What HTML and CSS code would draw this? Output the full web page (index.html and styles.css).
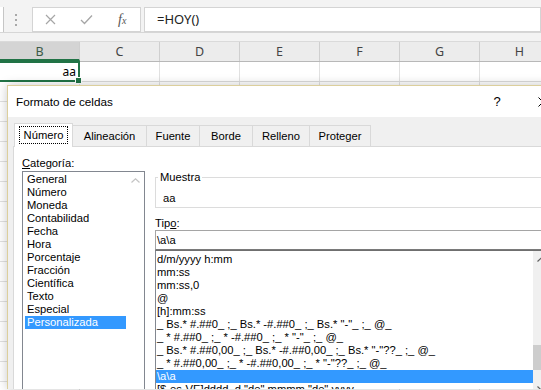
FILE: index.html
```html
<!DOCTYPE html>
<html lang="es">
<head>
    <meta charset="UTF-8">
    <title>Formato de celdas</title>
    <link rel="stylesheet" href="styles.css">
</head>
<body>
    <!-- barra de fórmulas -->
    <div class="formula-bar">
        <div class="namebox-edge"></div>
        <div class="grip"><i></i><i></i><i></i></div>
        <div class="fx-buttons">
            <span class="fx-slot">
                <svg width="11" height="11" viewBox="0 0 11 11"><path d="M1 1L10 10M10 1L1 10" stroke="#a6a6a6" stroke-width="1.2" fill="none"/></svg>
            </span>
            <span class="fx-slot">
                <svg width="13" height="11" viewBox="0 0 13 11"><path d="M1 6L4.5 9.5L12 1.5" stroke="#a6a6a6" stroke-width="1.3" fill="none"/></svg>
            </span>
            <span class="fx-slot fx">f<sub>x</sub></span>
        </div>
        <div class="formula">=HOY()</div>
    </div>
    <div class="bar-gap"></div>

    <!-- hoja -->
    <div class="col-headers">
        <div class="col sel">B</div>
        <div class="col">C</div>
        <div class="col">D</div>
        <div class="col">E</div>
        <div class="col">F</div>
        <div class="col">G</div>
        <div class="col">H</div>
    </div>
    <div class="row">
        <div class="cell active">aa<span class="handle"></span></div>
        <div class="cell"></div>
        <div class="cell"></div>
        <div class="cell"></div>
        <div class="cell"></div>
        <div class="cell"></div>
        <div class="cell"></div>
    </div>
    <div class="sheet-rest"></div>

    <!-- dialogo -->
    <div class="dialog">
        <div class="dialog-title">
            <span class="title-text">Formato de celdas</span>
            <span class="title-btn">?</span>
            <span class="title-btn">
                <svg width="10" height="10" viewBox="0 0 10 10"><path d="M0.5 0.5L9.5 9.5M9.5 0.5L0.5 9.5" stroke="#000" stroke-width="1" fill="none"/></svg>
            </span>
        </div>

        <div class="tabs">
            <div class="tab active" style="width: 59px"><span class="focus">Número</span></div>
            <div class="tab" style="width: 75px">Alineación</div>
            <div class="tab" style="width: 54px">Fuente</div>
            <div class="tab" style="width: 54px">Borde</div>
            <div class="tab" style="width: 58px">Relleno</div>
            <div class="tab" style="width: 62px">Proteger</div>
        </div>

        <div class="panel">
            <div class="left-col">
                <div class="label"><u>C</u>ategoría:</div>
                <div class="cat-list">
                    <div class="items">
                        <div class="item">General</div>
                        <div class="item">Número</div>
                        <div class="item">Moneda</div>
                        <div class="item">Contabilidad</div>
                        <div class="item">Fecha</div>
                        <div class="item">Hora</div>
                        <div class="item">Porcentaje</div>
                        <div class="item">Fracción</div>
                        <div class="item">Científica</div>
                        <div class="item">Texto</div>
                        <div class="item">Especial</div>
                        <div class="item selected">Personalizada</div>
                    </div>
                    <div class="scroll disabled">
                        <div class="arrow">
                            <svg width="9" height="5" viewBox="0 0 9 5"><path d="M0.5 4.5L4.5 0.8L8.5 4.5" stroke="#c4c4c4" stroke-width="1.2" fill="none"/></svg>
                        </div>
                    </div>
                </div>
            </div>

            <div class="right-col">
                <fieldset class="sample">
                    <legend>Muestra</legend>
                    <div class="sample-value">aa</div>
                </fieldset>

                <div class="label tipo">Tip<u>o</u>:</div>
                <div class="type-input">\a\a</div>
                <div class="type-list">
                    <div class="items">
                        <div class="item">d/m/yyyy h:mm</div>
                        <div class="item">mm:ss</div>
                        <div class="item">mm:ss,0</div>
                        <div class="item">@</div>
                        <div class="item">[h]:mm:ss</div>
                        <div class="item">_ Bs.* #.##0_ ;_ Bs.* -#.##0_ ;_ Bs.* "-"_ ;_ @_</div>
                        <div class="item">_ * #.##0_ ;_ * -#.##0_ ;_ * "-"_ ;_ @_</div>
                        <div class="item">_ Bs.* #.##0,00_ ;_ Bs.* -#.##0,00_ ;_ Bs.* "-"??_ ;_ @_</div>
                        <div class="item">_ * #.##0,00_ ;_ * -#.##0,00_ ;_ * "-"??_ ;_ @_</div>
                        <div class="item selected">\a\a</div>
                        <div class="item">[$-es-VE]dddd, d "de" mmmm "de" yyyy</div>
                    </div>
                    <div class="scroll">
                        <div class="arrow">
                            <svg width="9" height="5" viewBox="0 0 9 5"><path d="M0.5 4.5L4.5 0.8L8.5 4.5" stroke="#606060" stroke-width="1.2" fill="none"/></svg>
                        </div>
                        <div class="track"><div class="thumb"></div></div>
                        <div class="arrow">
                            <svg width="9" height="5" viewBox="0 0 9 5"><path d="M0.5 0.5L4.5 4.2L8.5 0.5" stroke="#606060" stroke-width="1.2" fill="none"/></svg>
                        </div>
                    </div>
                </div>
            </div>
        </div>
    </div>
</body>
</html>
```

FILE: styles.css
```css
body {
    margin: 0;
    width: 541px;
    height: 390px;
    overflow: hidden;
    position: relative;
    background: #fff;
    font-family: "Noto Sans", sans-serif;
    color: #000;
}

/* barra de formulas */
.formula-bar {
    display: flex;
    height: 33px;
    padding-top: 7px;
    box-sizing: border-box;
    background: #f3f3f3;
    border-bottom: 1px solid #d6d6d6;
}
.namebox-edge {
    width: 3px;
    height: 25px;
    background: #fff;
    border-right: 1px solid #c6c6c6;
}
.grip {
    width: 23px;
    display: flex;
    flex-direction: column;
    align-items: center;
    justify-content: center;
    gap: 3px;
}
.grip i {
    width: 2px;
    height: 2px;
    background: #a8a8a8;
}
.fx-buttons {
    display: flex;
    width: 109px;
    height: 25px;
    margin-left: 5px;
    box-sizing: border-box;
    background: #fff;
    border: 1px solid #d4d4d4;
}
.fx-slot {
    width: 36px;
    display: flex;
    align-items: center;
    justify-content: center;
}
.fx {
    font-family: "Liberation Serif", serif;
    font-style: italic;
    font-size: 14px;
    color: #555;
    padding-top: 1px;
}
.fx sub {
    font-size: 10px;
    vertical-align: -1px;
}
.formula {
    flex: 1;
    height: 25px;
    margin-left: 3px;
    box-sizing: border-box;
    background: #fff;
    border: 1px solid #d4d4d4;
    padding-left: 12px;
    font-size: 13px;
    line-height: 22px;
    color: #222;
}
.bar-gap {
    height: 8px;
    background: #f3f3f3;
}

/* hoja */
.col-headers {
    display: flex;
    height: 21px;
    box-sizing: border-box;
    background: #ececec;
    border-top: 1px solid #dadada;
    border-bottom: 1px solid #b8b8b8;
}
.col {
    flex: none;
    width: 80px;
    box-sizing: border-box;
    border-right: 1px solid #cfcfcf;
    text-align: center;
    font-size: 12.5px;
    line-height: 19px;
    color: #444;
}
.col.sel {
    background: #d4d4d4;
    color: #3d5a47;
    border-bottom: 2px solid #217346;
}
.row {
    display: flex;
    height: 20px;
    box-sizing: border-box;
    border-bottom: 1px solid #dadada;
}
.cell {
    flex: none;
    width: 80px;
    box-sizing: border-box;
    border-right: 1px solid #e1e1e1;
}
.cell.active {
    position: relative;
    margin-top: -1px;
    height: 21px;
    border: 2px solid #217346;
    border-left: none;
    text-align: right;
    padding-right: 2px;
    font-size: 12px;
    line-height: 18px;
}
.handle {
    position: absolute;
    right: -4px;
    bottom: -4px;
    width: 5px;
    height: 5px;
    background: #217346;
    border: 1px solid #fff;
}
.sheet-rest {
    height: 308px;
    background:
        repeating-linear-gradient(to bottom, transparent 0 19px, #e1e1e1 19px 20px),
        repeating-linear-gradient(to right, transparent 0 79px, #e1e1e1 79px 80px);
}

/* dialogo */
.dialog {
    position: absolute;
    left: 7px;
    top: 85px;
    width: 558px;
    height: 303px;
    overflow: hidden;
    background: #f0f0f0;
    border: 1px solid #dccf9c;
    border-bottom: none;
    box-shadow: 0 0 10px rgba(0, 0, 0, 0.22);
    font-family: "Liberation Sans", sans-serif;
    font-size: 11.2px;
}
.dialog-title {
    display: flex;
    align-items: center;
    height: 31px;
    background: #fff;
    padding-left: 8px;
}
.title-text {
    flex: 1;
    font-size: 11.7px;
}
.title-btn {
    width: 46px;
    text-align: center;
    font-size: 13px;
    display: flex;
    justify-content: center;
}
.tabs {
    display: flex;
    align-items: flex-end;
    height: 23px;
    margin-top: 6px;
    padding-left: 6px;
}
.tab {
    flex: none;
    height: 21px;
    box-sizing: border-box;
    margin-left: -1px;
    background: #f0f0f0;
    border: 1px solid #d9d9d9;
    border-bottom: none;
    text-align: center;
    line-height: 20px;
}
.tab.active {
    height: 24px;
    margin-bottom: -1px;
    margin-left: 0;
    position: relative;
    z-index: 1;
    background: #fff;
    line-height: 22px;
}
.focus {
    outline: 1px dotted #000;
    outline-offset: 1px;
    padding: 1px 3px;
}
.panel {
    display: grid;
    grid-template-columns: 123px 396px;
    column-gap: 10px;
    margin-left: 5px;
    height: 240px;
    padding: 8px;
    background: #fff;
    border: 1px solid #d9d9d9;
}
.label {
    line-height: 16px;
}
.cat-list {
    display: flex;
    height: 230px;
    box-sizing: border-box;
    border: 1px solid #828790;
}
.items {
    flex: 1;
    padding: 1px 1px 0 2px;
    overflow: hidden;
}
.item {
    height: 13px;
    line-height: 13px;
    padding-left: 2px;
    white-space: nowrap;
}
.item.selected {
    background: #3399ff;
    color: #fff;
}
.scroll {
    flex: none;
    width: 17px;
    display: flex;
    flex-direction: column;
    background: #f0f0f0;
}
.scroll.disabled {
    background: #fff;
}
.arrow {
    height: 17px;
    display: flex;
    align-items: center;
    justify-content: center;
}
.track {
    height: 112px;
}
.thumb {
    margin-top: 77px;
    height: 25px;
    background: #cdcdcd;
}
.right-col {
    display: flex;
    flex-direction: column;
}
.sample {
    margin: 15px 0 0;
    padding: 7px 7px 2px;
    border: 1px solid #dcdcdc;
    min-width: 0;
}
.sample legend {
    margin-left: -5px;
    padding: 0 2px;
    line-height: 14px;
}
.sample-value {
    line-height: 14px;
}
.label.tipo {
    margin-top: 8px;
    line-height: 14px;
}
.type-input {
    height: 20px;
    box-sizing: border-box;
    border: 1px solid #a5a5a5;
    border-bottom-color: #7a7a7a;
    padding-left: 1px;
    line-height: 18px;
}
.type-list {
    display: flex;
    height: 150px;
    box-sizing: border-box;
    border: 1px solid #828790;
    border-top-color: #6f6f6f;
}
.type-list .items {
    padding: 2px 0 0 0;
}
.type-list .item {
    padding-left: 1px;
}
```
